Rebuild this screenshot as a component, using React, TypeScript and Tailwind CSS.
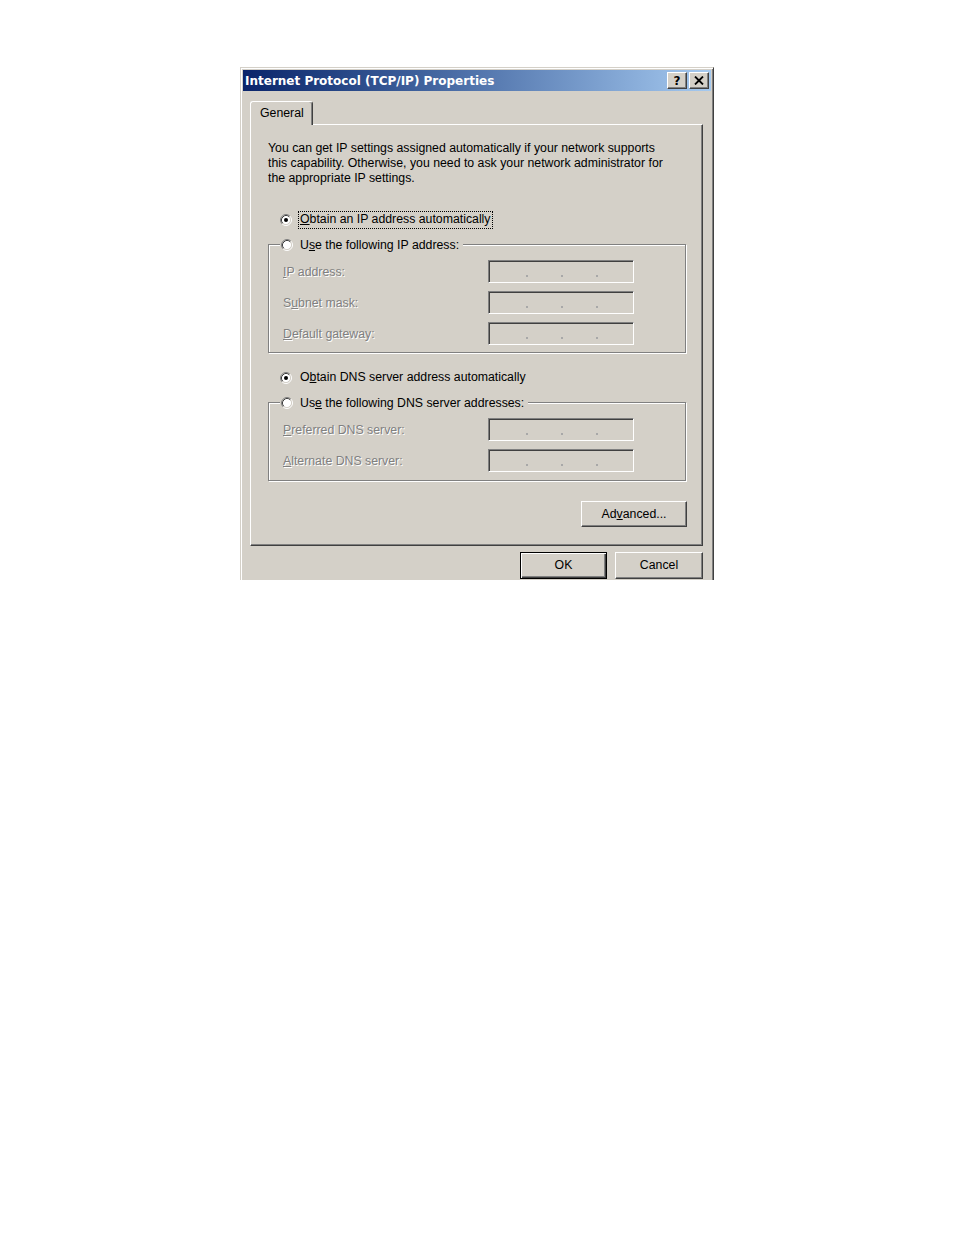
import React from 'react';

function Radio({ checked }: { checked?: boolean }) {
  return (
    <svg width="12" height="12" viewBox="0 0 12 12" className="shrink-0">
      <circle cx="6" cy="6" r="4.5" fill="#fff" />
      <path d="M2.11 9.89 A5.5 5.5 0 0 1 9.89 2.11" stroke="#808080" fill="none" />
      <path d="M9.89 2.11 A5.5 5.5 0 0 1 2.11 9.89" stroke="#fff" fill="none" />
      <path d="M2.82 9.18 A4.5 4.5 0 0 1 9.18 2.82" stroke="#404040" fill="none" />
      <path d="M9.18 2.82 A4.5 4.5 0 0 1 2.82 9.18" stroke="#d4d0c8" fill="none" />
      {checked && <circle cx="6" cy="6" r="2" fill="#000" />}
    </svg>
  );
}

function RadioLabel({ children, focused }: { children: React.ReactNode; focused?: boolean }) {
  return (
    <span
      className={
        focused
          ? 'border border-dotted border-black px-[1px] h-[18px] flex items-center'
          : 'border border-transparent px-[1px] h-[18px] flex items-center'
      }
    >
      {children}
    </span>
  );
}

function IpField() {
  return (
    <div className="w-[146px] h-[23px] border border-t-[#808080] border-l-[#808080] border-r-white border-b-white shadow-[inset_1px_1px_0_#404040,inset_-1px_-1px_0_#d4d0c8] flex items-start pt-[14px] pl-[37px] gap-[33px]">
      <span className="w-[2px] h-[2px] bg-[#a8a8a8]" />
      <span className="w-[2px] h-[2px] bg-[#a8a8a8]" />
      <span className="w-[2px] h-[2px] bg-[#a8a8a8]" />
    </div>
  );
}

function FieldRow({ children }: { children: React.ReactNode }) {
  return (
    <div className="flex items-center h-[23px]">
      <span className="w-[205px] pt-[1px] text-[#808080] [text-shadow:1px_1px_0_#fff]">{children}</span>
      <IpField />
    </div>
  );
}

function GroupBox({ legend, children }: { legend: React.ReactNode; children: React.ReactNode }) {
  return (
    <div className="relative w-[418px] border border-[#808080] shadow-[1px_1px_0_#fff,inset_1px_1px_0_#fff]">
      <div className="absolute -top-[9px] left-[11px] flex items-center gap-[5px] h-[18px] bg-[#d4d0c8] pl-[1px] pr-[2px]">
        <Radio />
        <RadioLabel>{legend}</RadioLabel>
      </div>
      {children}
    </div>
  );
}

function Button({ children, primary, className }: { children: React.ReactNode; primary?: boolean; className: string }) {
  return (
    <button
      className={
        primary
          ? `${className} flex items-center justify-center border border-black shadow-[inset_1px_1px_0_#fff,inset_-1px_-1px_0_#404040,inset_-2px_-2px_0_#808080] bg-[#d4d0c8]`
          : `${className} flex items-center justify-center border border-t-white border-l-white border-r-[#404040] border-b-[#404040] shadow-[inset_-1px_-1px_0_#808080] bg-[#d4d0c8]`
      }
    >
      {children}
    </button>
  );
}

export default function App() {
  return (
    <div className="min-h-[1235px] bg-white pt-[67px] pl-[240px] font-['Liberation_Sans',Arial,sans-serif] text-[12.3px] text-black">
      {/* screenshot is cut off below the dialog buttons */}
      <div className="w-[474px] h-[513px] overflow-hidden">
        <div className="w-[474px] h-[530px] bg-[#d4d0c8] border border-t-[#d4d0c8] border-l-[#d4d0c8] border-r-[#404040] border-b-[#404040] shadow-[inset_1px_1px_0_#fff,inset_-1px_-1px_0_#808080] p-[2px]">
          {/* Title bar */}
          <div className="h-[21px] flex items-center justify-between pl-[2px] pr-[2px] bg-linear-to-r from-[#0a246a] to-[#a6caf0]">
            <span className="font-['DejaVu_Sans',Verdana,sans-serif] font-bold text-[12px] leading-none text-white">
              Internet Protocol (TCP/IP) Properties
            </span>
            <div className="flex gap-[2px]">
              <div className="w-[20px] h-[17px] flex items-center justify-center bg-[#d4d0c8] border border-t-white border-l-white border-r-[#404040] border-b-[#404040] shadow-[inset_-1px_-1px_0_#808080] font-['DejaVu_Sans',sans-serif] font-bold text-[12px] leading-none">
                ?
              </div>
              <div className="w-[20px] h-[17px] flex items-center justify-center bg-[#d4d0c8] border border-t-white border-l-white border-r-[#404040] border-b-[#404040] shadow-[inset_-1px_-1px_0_#808080]">
                <svg width="10" height="9" viewBox="0 0 10 9">
                  <path d="M1 0.5 L9 8.5 M9 0.5 L1 8.5" stroke="#000" strokeWidth="1.8" />
                </svg>
              </div>
            </div>
          </div>

          {/* Body */}
          <div className="pt-[10px] pl-[7px] pr-[8px] flex flex-col">
            <div className="relative z-10 w-[63px] h-[24px] bg-[#d4d0c8] border-t border-l border-t-white border-l-white border-r border-r-[#404040] shadow-[inset_-1px_0_0_#808080] rounded-t-[3px] pl-[9px] flex items-center">
              General
            </div>
            <div className="-mt-[1px] w-[453px] h-[422px] border border-t-white border-l-white border-r-[#404040] border-b-[#404040] shadow-[inset_-1px_-1px_0_#808080] pl-[17px] pt-[16px]">
              <div className="w-[419px] flex flex-col">
                <p className="leading-[15px]">
                  You can get IP settings assigned automatically if your network supports
                  <br />
                  this capability. Otherwise, you need to ask your network administrator for
                  <br />
                  the appropriate IP settings.
                </p>

                <div className="mt-[25px] ml-[12px] h-[17px] flex items-center gap-[6px]">
                  <Radio checked />
                  <RadioLabel focused>
                    <span>
                      <u>O</u>btain an IP address automatically
                    </span>
                  </RadioLabel>
                </div>

                <div className="mt-[16px]">
                  <GroupBox
                    legend={
                      <span>
                        U<u>s</u>e the following IP address:
                      </span>
                    }
                  >
                    <div className="flex flex-col gap-[8px] pt-[15px] pb-[7px] pl-[14px]">
                      <FieldRow>
                        <u>I</u>P address:
                      </FieldRow>
                      <FieldRow>
                        S<u>u</u>bnet mask:
                      </FieldRow>
                      <FieldRow>
                        <u>D</u>efault gateway:
                      </FieldRow>
                    </div>
                  </GroupBox>
                </div>

                <div className="mt-[16px] ml-[12px] h-[17px] flex items-center gap-[6px]">
                  <Radio checked />
                  <RadioLabel>
                    <span>
                      O<u>b</u>tain DNS server address automatically
                    </span>
                  </RadioLabel>
                </div>

                <div className="mt-[16px]">
                  <GroupBox
                    legend={
                      <span>
                        Us<u>e</u> the following DNS server addresses:
                      </span>
                    }
                  >
                    <div className="flex flex-col gap-[8px] pt-[15px] pb-[8px] pl-[14px]">
                      <FieldRow>
                        <u>P</u>referred DNS server:
                      </FieldRow>
                      <FieldRow>
                        <u>A</u>lternate DNS server:
                      </FieldRow>
                    </div>
                  </GroupBox>
                </div>

                <div className="mt-[20px] flex justify-end">
                  <Button className="w-[106px] h-[26px]">
                    <span>
                      Ad<u>v</u>anced...
                    </span>
                  </Button>
                </div>
              </div>
            </div>

            <div className="mt-[6px] flex justify-end gap-[8px]">
              <Button primary className="w-[87px] h-[27px]">
                OK
              </Button>
              <Button className="w-[88px] h-[27px]">Cancel</Button>
            </div>
          </div>
        </div>
      </div>
    </div>
  );
}
